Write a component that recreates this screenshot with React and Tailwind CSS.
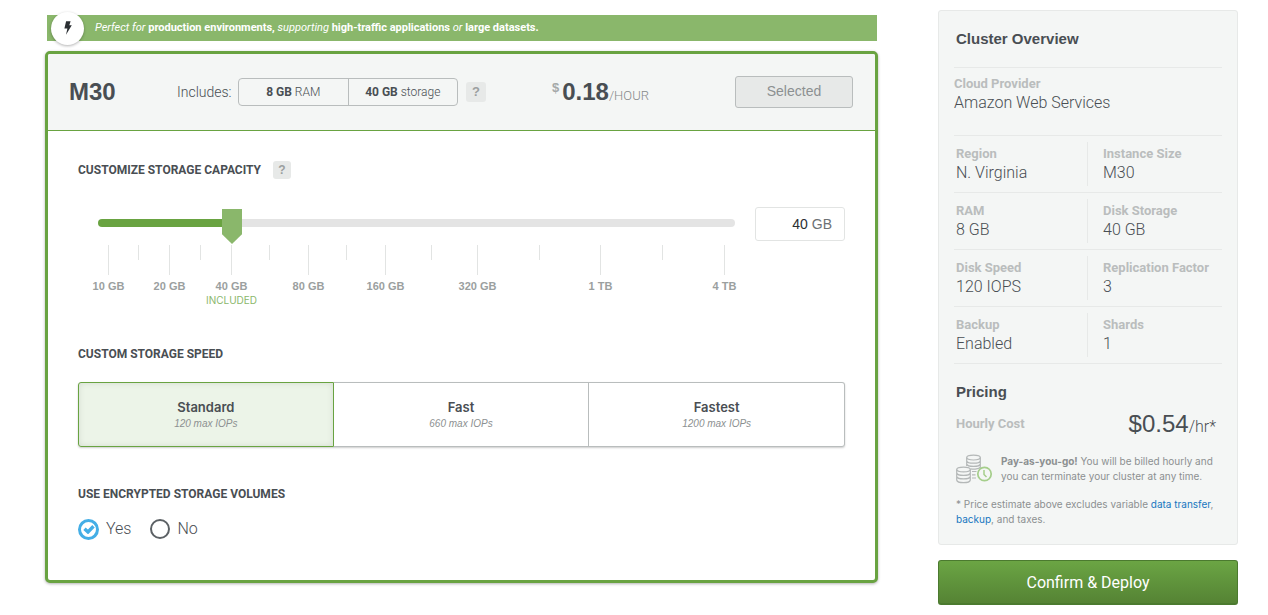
import { useState } from "react";

const TICKS = [
  { label: "10 GB" },
  {},
  { label: "20 GB" },
  {},
  { label: "40 GB", included: true },
  {},
  { label: "80 GB" },
  {},
  { label: "160 GB" },
  {},
  { label: "320 GB" },
  {},
  { label: "1 TB" },
  {},
  { label: "4 TB" },
];

const SPEEDS = [
  { name: "Standard", iops: "120 max IOPs" },
  { name: "Fast", iops: "660 max IOPs" },
  { name: "Fastest", iops: "1200 max IOPs" },
];

const DETAILS = [
  ["Region", "N. Virginia", "Instance Size", "M30"],
  ["RAM", "8 GB", "Disk Storage", "40 GB"],
  ["Disk Speed", "120 IOPS", "Replication Factor", "3"],
  ["Backup", "Enabled", "Shards", "1"],
];

function Banner() {
  return (
    <div className="mr-px ml-0.5 flex h-[26px] items-center bg-[#8ab76b] pl-1 text-white">
      <span className="flex size-[33px] shrink-0 items-center justify-center rounded-full bg-white shadow-[0_1px_3px_rgba(0,0,0,0.3)]">
        <svg viewBox="0 0 8 14" className="h-[14px] w-2" fill="#2b2f33" aria-hidden="true">
          <path d="M2.1 0.3H6.6L5.3 4.3H7.8L2 13.7L3.4 7.5H0.4Z" />
        </svg>
      </span>
      <p className="ml-[11px] font-[Roboto,sans-serif] text-[11px] leading-4">
        <em>Perfect for</em> <b>production environments,</b> <em>supporting</em>{" "}
        <b>high-traffic applications</b> <em>or</em> <b>large datasets.</b>
      </p>
    </div>
  );
}

function SectionTitle({ id, children }) {
  return (
    <h2 id={id} className="font-[Roboto,sans-serif] text-xs leading-[18px] font-bold">
      {children}
    </h2>
  );
}

function TierHeader() {
  return (
    <header className="flex h-[77px] items-center border-b border-[#69a341] bg-[#f4f6f5] pr-[22px] pl-[21px]">
      <h1 className="w-[108px] text-2xl font-bold">M30</h1>
      <span className="w-[61px] font-[Roboto,sans-serif] text-sm font-light">Includes:</span>
      <div className="flex h-7 w-[220px] rounded-sm border border-[#b9bdbd] font-[Roboto,sans-serif] text-[12px] leading-[26px] font-light">
        <span className="flex-1 border-r border-[#b9bdbd] text-center">
          <span className="font-bold">8 GB</span> RAM
        </span>
        <span className="flex-1 text-center">
          <span className="font-bold">40 GB</span> storage
        </span>
      </div>
      <button
        type="button"
        aria-label="About included resources"
        className="ml-2 size-5 rounded-[3px] bg-[#e7e9e8] text-[13px] leading-5 font-bold text-[#9b9f9f]"
      >
        ?
      </button>
      <div className="ml-[66px] flex items-start pt-2">
        <span className="mr-[3px] text-[13px] leading-5 font-bold text-[#a5a9a9]">$</span>
        <span className="text-2xl leading-7 font-bold">0.18</span>
        <span className="font-[Roboto,sans-serif] text-[13px] leading-9 font-light text-[#85898a]">/HOUR</span>
      </div>
      <button
        type="button"
        className="ml-auto h-8 w-[118px] rounded-[3px] border border-[#b9bdbd] bg-[#e7e9e8] pb-0.5 text-sm text-[#8c9091]"
      >
        Selected
      </button>
    </header>
  );
}

function StorageCapacity() {
  const [position, setPosition] = useState(124);
  const [size, setSize] = useState("40");
  return (
    <section>
      <div className="flex items-center">
        <SectionTitle id="capacity">CUSTOMIZE STORAGE CAPACITY</SectionTitle>
        <button
          type="button"
          aria-label="About storage capacity"
          className="ml-3 size-[18px] rounded-[3px] bg-[#e7e9e8] text-xs leading-[18px] font-bold text-[#9b9f9f]"
        >
          ?
        </button>
      </div>
      <div className="mt-7 flex items-start gap-5 pl-5">
        <div className="min-w-0 flex-1">
          <input
            type="range"
            min="0"
            max="617"
            value={position}
            onChange={(e) => setPosition(Number(e.target.value))}
            aria-labelledby="capacity"
            style={{ "--fill": `${((position + 10) / 637) * 100}%` }}
            className="mb-1 block h-8 w-full cursor-pointer appearance-none bg-transparent [&::-webkit-slider-runnable-track]:h-2 [&::-webkit-slider-runnable-track]:rounded-full [&::-webkit-slider-runnable-track]:bg-[linear-gradient(to_right,#69a341_var(--fill),#e4e4e4_var(--fill))] [&::-webkit-slider-thumb]:-mt-[10px] [&::-webkit-slider-thumb]:h-[35px] [&::-webkit-slider-thumb]:w-5 [&::-webkit-slider-thumb]:appearance-none [&::-webkit-slider-thumb]:bg-[#8ab76b] [&::-webkit-slider-thumb]:[clip-path:polygon(0_0,100%_0,100%_72%,50%_100%,0_72%)]"
          />
          <div className="grid h-[62px] grid-cols-[30fr_31fr_31fr_31fr_38fr_39fr_38fr_39fr_46fr_46fr_62fr_61fr_62fr_62fr_1fr] px-[10px] pt-0.5 text-[11px] font-bold text-[#9b9f9f]">
            {TICKS.map((tick, i) => (
              <div key={i} className="flex w-px flex-col items-center whitespace-nowrap">
                <span className={tick.label ? "h-[30px] w-px bg-[#e2e4e3]" : "h-[15px] w-px bg-[#e2e4e3]"} />
                {tick.label && <span className="mt-1 leading-[15px]">{tick.label}</span>}
                {tick.included && (
                  <span className="font-[Inter,sans-serif] text-[10px] leading-[13px] font-normal text-[#8ab76b]">
                    INCLUDED
                  </span>
                )}
              </div>
            ))}
          </div>
        </div>
        <label className="flex h-[34px] w-[90px] items-center gap-1 rounded-[3px] border border-[#e2e4e3] pr-3 text-sm text-[#6c7174]">
          <input
            aria-label="Storage size"
            value={size}
            onChange={(e) => setSize(e.target.value)}
            className="w-0 min-w-0 flex-1 bg-transparent text-right text-[#2b2f33] outline-none"
          />
          GB
        </label>
      </div>
    </section>
  );
}

function StorageSpeed() {
  const [speed, setSpeed] = useState("Standard");
  return (
    <section className="mt-10">
      <SectionTitle>CUSTOM STORAGE SPEED</SectionTitle>
      <div className="mt-[19px] grid h-[65px] grid-cols-3 rounded-[3px] shadow-[0_1px_2px_rgba(0,0,0,0.2)]">
        {SPEEDS.map(({ name, iops }) => (
          <button
            key={name}
            type="button"
            aria-pressed={speed === name}
            onClick={() => setSpeed(name)}
            className={
              speed === name
                ? "border border-[#69a341] bg-[#ecf4e8] pt-px shadow-[inset_0_0_6px_rgba(0,0,0,0.1)] first:rounded-l-[3px] last:rounded-r-[3px]"
                : "border-y border-r border-[#b9bdbd] bg-white pt-px first:rounded-l-[3px] first:border-l last:rounded-r-[3px]"
            }
          >
            <span className="block font-[Inter,sans-serif] text-[13px] leading-[18px] font-semibold">{name}</span>
            <span className="block text-[10px] leading-4 text-[#8c9091] italic">{iops}</span>
          </button>
        ))}
      </div>
    </section>
  );
}

function EncryptionOption({ value, checked, onSelect }) {
  return (
    <label className="flex items-center font-[Roboto,sans-serif] text-base leading-6 font-light">
      <span className="grid size-[21px] place-items-center">
        <input
          type="radio"
          name="encryption"
          checked={checked}
          onChange={onSelect}
          className="col-start-1 row-start-1 size-5 appearance-none rounded-full border-2 border-[#5c6165] checked:size-[21px] checked:border-[3px] checked:border-[#44aee6]"
        />
        {checked && (
          <svg viewBox="0 0 12 10" className="pointer-events-none col-start-1 row-start-1 h-[10px] w-3" aria-hidden="true">
            <path d="M1.5 4.7L5 8L10.5 2.3" fill="none" stroke="#44aee6" strokeWidth="3.4" />
          </svg>
        )}
      </span>
      <span className="ml-[7px]">{value}</span>
    </label>
  );
}

function Encryption() {
  const [choice, setChoice] = useState("Yes");
  return (
    <section className="mt-[38px]">
      <SectionTitle>USE ENCRYPTED STORAGE VOLUMES</SectionTitle>
      <div className="mt-[14px] flex gap-[18px]">
        {["Yes", "No"].map((value) => (
          <EncryptionOption key={value} value={value} checked={choice === value} onSelect={() => setChoice(value)} />
        ))}
      </div>
    </section>
  );
}

function Detail({ label, value }) {
  return (
    <div className="font-[Roboto,sans-serif]">
      <dt className="text-[13px] leading-[18px] font-bold text-[#babdbd]">{label}</dt>
      <dd className="text-base leading-5 font-light">{value}</dd>
    </div>
  );
}

function CoinsIcon() {
  return (
    <svg viewBox="0 0 37 30" className="h-[30px] w-[37px] shrink-0" fill="none" stroke="#b4b8b8" strokeWidth="1.2" aria-hidden="true">
      <ellipse cx="17.5" cy="3.6" rx="6.8" ry="2.4" />
      <path d="M10.7 3.6V12M24.3 3.6V14M10.7 6.8C11.5 10 23.5 10 24.3 6.8M10.7 10C11.5 13.2 23.5 13.2 24.3 10M14.5 14.8C18 15.6 23.5 15 24.3 13" />
      <ellipse cx="7.5" cy="15.5" rx="6.8" ry="2.4" />
      <path d="M0.7 15.5V26C1.5 29.6 13.5 29.6 14.3 26V15.5M0.7 19C1.5 22.2 13.5 22.2 14.3 19M0.7 22.5C1.5 25.7 13.5 25.7 14.3 22.5" />
      <path d="M16 17.5H20.5M16 20.8H19.5M16 24H20" />
      <circle cx="28.5" cy="20" r="6.7" stroke="#a5ce8b" strokeWidth="1.7" />
      <path d="M28 16V20.5L30.5 23" stroke="#a5ce8b" strokeWidth="1.5" />
    </svg>
  );
}

function Overview() {
  return (
    <div className="rounded-[3px] border border-[#e7e9e8] bg-[#f4f6f5] px-[15px] pt-[18px] pb-[17px]">
      <h2 className="pl-0.5 text-[15px] leading-5 font-bold">Cluster Overview</h2>
      <dl className="mt-[18px]">
        <div className="h-[68px] border-t border-[#e7e9e8] pt-[7px]">
          <Detail label="Cloud Provider" value="Amazon Web Services" />
        </div>
        {DETAILS.map(([a, b, c, d]) => (
          <div key={a} className="grid h-[57px] grid-cols-2 border-t border-[#e7e9e8] pt-1.5 pb-1.5">
            <div className="border-r border-[#e7e9e8] pt-[3px] pl-0.5">
              <Detail label={a} value={b} />
            </div>
            <div className="pt-[3px] pl-[15px]">
              <Detail label={c} value={d} />
            </div>
          </div>
        ))}
      </dl>
      <div className="border-t border-[#e7e9e8] pt-[18px] pl-0.5">
        <h2 className="text-[15px] leading-5 font-bold">Pricing</h2>
        <div className="mt-1.5 flex items-center justify-between pr-1.5">
          <span className="font-[Roboto,sans-serif] text-[13px] font-bold text-[#babdbd]">Hourly Cost</span>
          <span className="text-2xl leading-8">
            $0.54<span className="font-[Roboto,sans-serif] text-base font-light">/hr*</span>
          </span>
        </div>
        <div className="mt-[14px] flex text-[#8c9091]">
          <CoinsIcon />
          <p className="ml-2 font-[Inter,sans-serif] text-[10px] leading-[15px]">
            <b>Pay-as-you-go!</b> You will be billed hourly and you can terminate your cluster at any time.
          </p>
        </div>
        <p className="mt-[13px] font-[Inter,sans-serif] text-[10px] leading-[15px] text-[#8c9091]">
          * Price estimate above excludes variable{" "}
          <a href="#data-transfer" className="text-[#1677c0]">data transfer</a>,{" "}
          <a href="#backup" className="text-[#1677c0]">backup</a>, and taxes.
        </p>
      </div>
    </div>
  );
}

export default function App() {
  return (
    <div className="flex items-start gap-[60px] bg-white pt-[10px] pr-[30px] pb-[10px] pl-[45px] font-['Liberation_Sans',Arial,sans-serif] text-[#494e53]">
      <main className="min-w-0 flex-1 pt-[5px]">
        <Banner />
        <div className="mt-[10px] overflow-hidden rounded-[5px] border-[3px] border-[#69a341] bg-white shadow-[0_1px_3px_rgba(0,0,0,0.3)]">
          <TierHeader />
          <div className="px-[30px] pt-[30px] pb-[39px]">
            <StorageCapacity />
            <StorageSpeed />
            <Encryption />
          </div>
        </div>
      </main>
      <aside className="w-[300px] shrink-0">
        <Overview />
        <button
          type="button"
          className="mt-[15px] h-[45px] w-full rounded-[3px] border border-b-2 border-[#4b7a2f] bg-linear-to-b from-[#6ba544] to-[#558334] pt-0.5 font-[Roboto,sans-serif] text-base text-white"
        >
          Confirm &amp; Deploy
        </button>
      </aside>
    </div>
  );
}
